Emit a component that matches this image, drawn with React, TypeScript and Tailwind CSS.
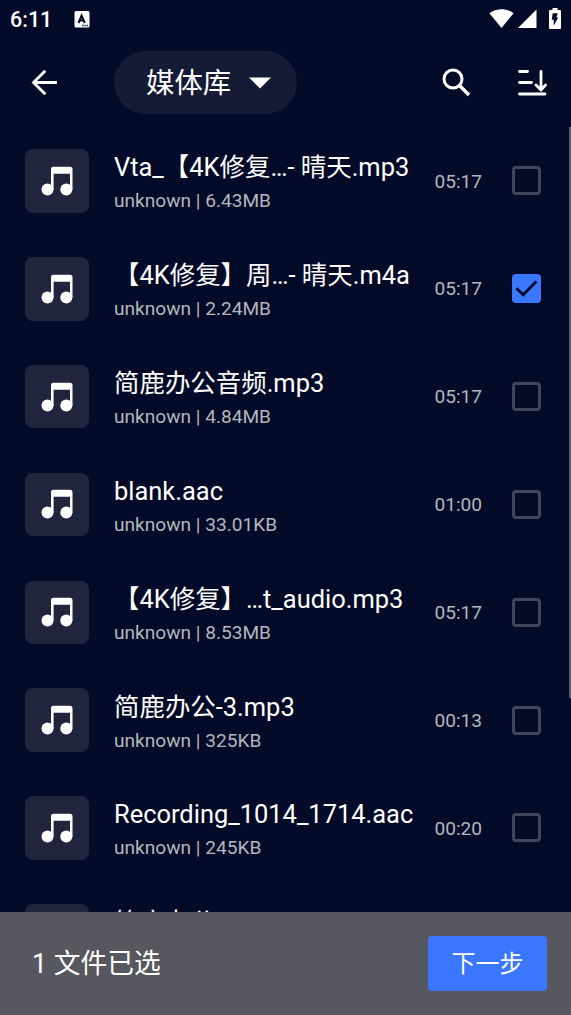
import { useState } from "react";
import clsx from "clsx";

type AudioFile = {
  id: number;
  title: string;
  size: string;
  duration: string;
};

const files: AudioFile[] = [
  { id: 1, title: "Vta_【4K修复…- 晴天.mp3", size: "6.43MB", duration: "05:17" },
  { id: 2, title: "【4K修复】周…- 晴天.m4a", size: "2.24MB", duration: "05:17" },
  { id: 3, title: "简鹿办公音频.mp3", size: "4.84MB", duration: "05:17" },
  { id: 4, title: "blank.aac", size: "33.01KB", duration: "01:00" },
  { id: 5, title: "【4K修复】…t_audio.mp3", size: "8.53MB", duration: "05:17" },
  { id: 6, title: "简鹿办公-3.mp3", size: "325KB", duration: "00:13" },
  { id: 7, title: "Recording_1014_1714.aac", size: "245KB", duration: "00:20" },
  { id: 8, title: "简鹿办公-2.mp3", size: "325KB", duration: "00:13" },
];

function StatusBar() {
  return (
    <div className="flex h-[38px] shrink-0 items-center pl-[10px] pr-[10px]">
      <span className="w-[42px] pt-[2px] text-[21.5px] leading-none font-medium">6:11</span>
      <svg className="ml-[22px]" width="16" height="17" viewBox="0 0 16 17">
        <rect x=".5" width="15" height="16.500" rx="1.5" fill="#fff" />
        <path d="M4.5 12 7.6 4.5 10.8 12M5.6 9.5h4" fill="none" stroke="#030b28" strokeWidth="2" />
        <path d="M8.2 14.500h1.300M10.400 14.500h1.300M12.600 14.500h1.300" stroke="#030b28" strokeWidth="1.4" />
      </svg>
      <div className="ml-auto flex items-center">
        <svg width="25" height="20" viewBox="0 0 25 20">
          <path d="M.4 4.2C7.4-1.1 17.6-1.1 24.6 4.2L12.5 19Z" fill="#fff" />
        </svg>
        <svg className="ml-[4px]" width="19" height="20" viewBox="0 0 19 20">
          <path d="M18.5.5V19H0Z" fill="#fff" />
        </svg>
        <svg className="mb-px ml-[12px]" width="12" height="21" viewBox="0 0 12 21">
          <path d="M3.5 0h5v2H11q1 0 1 1v17q0 1-1 1H1q-1 0-1-1V3q0-1 1-1h2.5Z" fill="#fff" />
          <path d="M3.7 5.2h5L7.4 9.5h1.8L4.7 17.7v-6H2.7Z" fill="#030b28" />
        </svg>
      </div>
    </div>
  );
}

function MusicTile() {
  return (
    <div className="flex h-[63.5px] w-16 shrink-0 items-center justify-center rounded-[8px] bg-[#20243d]">
      <svg width="32" height="30" viewBox="0 0 32 30" fill="#fff">
        <circle cx="6.5" cy="23.5" r="6" />
        <circle cx="25.3" cy="23.5" r="6" />
        <path d="M10 24V3Q10 .7 12.3.7H29Q31.5.7 31.5 3.2V24H29V7.7H12.6V24Z" />
      </svg>
    </div>
  );
}

function Checkbox({ checked, onChange }: { checked: boolean; onChange: () => void }) {
  return (
    <button
      role="checkbox"
      aria-checked={checked}
      onClick={onChange}
      className={clsx(
        "flex h-[29px] w-[29px] shrink-0 items-center justify-center rounded-[4px]",
        checked ? "bg-[#3b76ff]" : "border-[3px] border-[#41445a]",
      )}
    >
      {checked && (
        <svg width="23" height="17" viewBox="0 0 23 17">
          <path d="M1.5 8.2 8.2 14.7 21.3 1.5" fill="none" stroke="#030b28" strokeWidth="2.8" />
        </svg>
      )}
    </button>
  );
}

function FileRow({
  file,
  checked,
  onToggle,
}: {
  file: AudioFile;
  checked: boolean;
  onToggle: () => void;
}) {
  return (
    <li className="flex h-[107.85px] shrink-0 items-center pl-[25px] pr-[30px]">
      <MusicTile />
      <div className="ml-[25px] flex min-w-0 flex-1 flex-col gap-[7px] pt-[4px] whitespace-nowrap">
        <p className="h-[30px] text-[25.45px] leading-[30px]">{file.title}</p>
        <p className="h-6 text-[19.1px] leading-6 text-[#b5b6bb]">unknown | {file.size}</p>
      </div>
      <span className="mr-[30px] pt-[2px] text-[19.1px] text-[#b5b6bb]">{file.duration}</span>
      <Checkbox checked={checked} onChange={onToggle} />
    </li>
  );
}

export default function App() {
  const [selected, setSelected] = useState<Set<number>>(new Set([2]));

  function toggle(id: number) {
    setSelected((prev) => {
      const next = new Set(prev);
      if (!next.delete(id)) next.add(id);
      return next;
    });
  }

  return (
    <div className="flex h-[1015px] w-[571px] flex-col overflow-hidden bg-[#030b28] font-['Roboto','Noto_Sans_CJK_SC',sans-serif] text-white">
      <StatusBar />

      <header className="flex h-[89px] shrink-0 items-center pl-[31px] pr-[23px]">
        <button aria-label="返回">
          <svg width="27" height="26" viewBox="0 0 27 26" fill="none" stroke="#fff" strokeWidth="2.8">
            <path d="M26 12.5H3M14.3.7 2.5 12.5 14.3 24.3" />
          </svg>
        </button>
        <button className="ml-[56px] flex h-[63px] w-[183px] items-center rounded-full bg-[#151a35] pl-8">
          <span className="pt-[2px] text-[28.4px] leading-[34px]">媒体库</span>
          <svg className="ml-[18px]" width="22" height="12" viewBox="0 0 22 12">
            <path d="M0 .5h22L11 11.5Z" fill="#fff" />
          </svg>
        </button>
        <button aria-label="搜索" className="ml-auto">
          <svg width="29" height="29" viewBox="0 0 29 29" fill="none" stroke="#fff">
            <circle cx="11" cy="11" r="9" strokeWidth="3" />
            <path d="m17.5 17.5 9.5 9.5" strokeWidth="3.6" />
          </svg>
        </button>
        <button aria-label="排序" className="mr-px ml-[46px]">
          <svg width="30" height="27" viewBox="0 0 30 27" fill="none" stroke="#fff" strokeWidth="2.8" strokeLinecap="round">
            <path d="M2.5 2.5h8M2.5 13.5h12M2.5 25h25.500M24 2.500v18M19 16l5 5 4.500-5" />
          </svg>
        </button>
      </header>

      <main className="relative min-h-0 flex-1 overflow-hidden">
        <ul className="flex flex-col">
          {files.map((file) => (
            <FileRow
              key={file.id}
              file={file}
              checked={selected.has(file.id)}
              onToggle={() => toggle(file.id)}
            />
          ))}
        </ul>
        <div className="absolute top-0 right-0 h-[571px] w-[2px] bg-[#575b6e]" />
      </main>

      <footer className="flex h-[103px] shrink-0 items-center justify-between bg-[#575760] pl-8 pr-6">
        <span className="text-[26.8px] leading-8">{selected.size} 文件已选</span>
        <button className="h-[55px] w-[119px] rounded-[4px] bg-[#3b76ff] text-[24px] leading-7">
          下一步
        </button>
      </footer>
    </div>
  );
}
